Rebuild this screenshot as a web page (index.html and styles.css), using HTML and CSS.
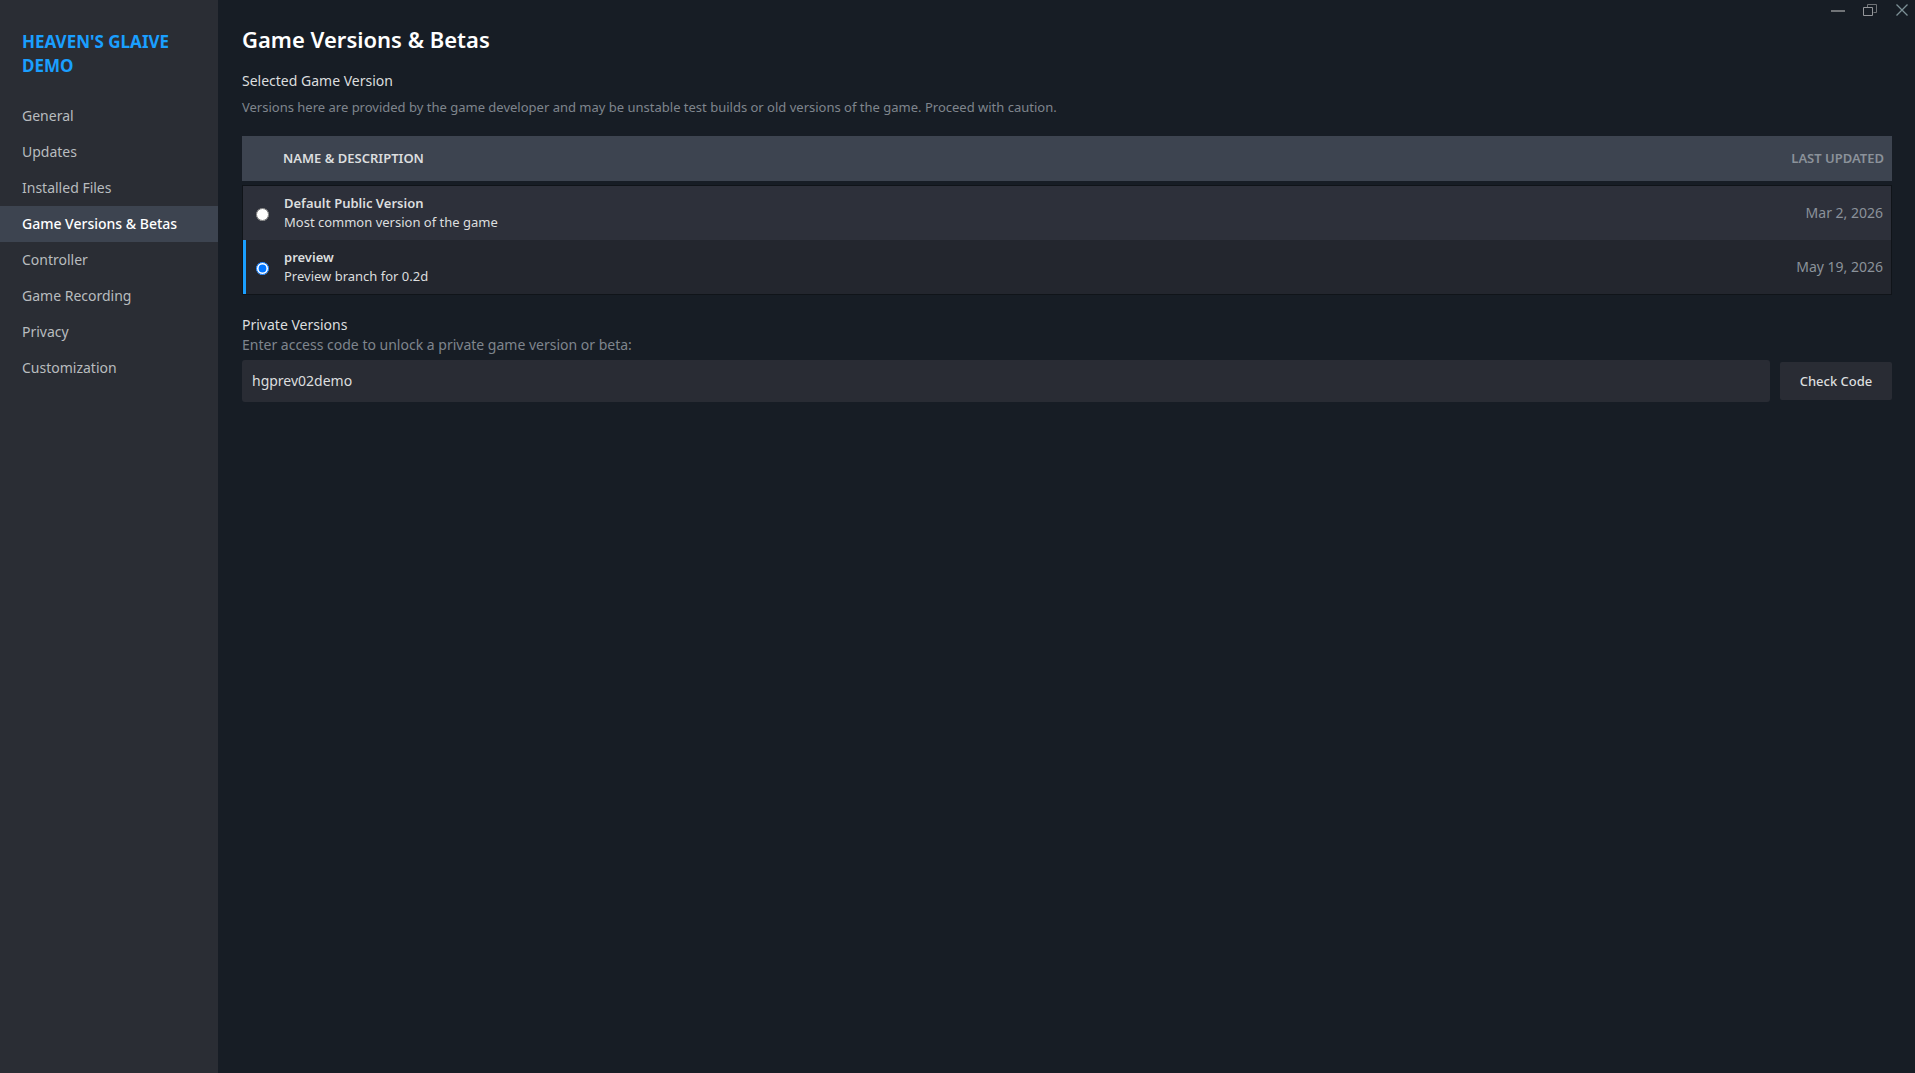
FILE: index.html
```html
<!DOCTYPE html>
<html lang="en">
<head>
<meta charset="utf-8">
<meta name="viewport" content="width=device-width, initial-scale=1">
<title>Heaven's Glaive Demo - Properties</title>
<link rel="stylesheet" href="styles.css">
</head>
<body>
<div class="app">
  <aside class="sidebar">
    <h1 class="game-title">HEAVEN'S GLAIVE DEMO</h1>
    <nav class="nav">
      <a class="nav-item" href="#general">General</a>
      <a class="nav-item" href="#updates">Updates</a>
      <a class="nav-item" href="#files">Installed Files</a>
      <a class="nav-item active" href="#betas" aria-current="page">Game Versions &amp; Betas</a>
      <a class="nav-item" href="#controller">Controller</a>
      <a class="nav-item" href="#recording">Game Recording</a>
      <a class="nav-item" href="#privacy">Privacy</a>
      <a class="nav-item" href="#customization">Customization</a>
    </nav>
  </aside>
  <div class="main">
    <div class="window-bar">
      <button class="window-button" type="button" aria-label="Minimize">
        <svg width="14" height="14" viewBox="0 0 14 14"><path d="M0 8H14" stroke="#707377" stroke-width="2"/></svg>
      </button>
      <button class="window-button" type="button" aria-label="Restore">
        <svg width="14" height="14" viewBox="0 0 14 14" fill="none"><path d="M4.5 4V1.5H13.5V9.5H10.5" stroke="#707377"/><path d="M.5 4.5H9.500V12.500H.5Z" stroke="#94969a"/></svg>
      </button>
      <button class="window-button" type="button" aria-label="Close">
        <svg width="14" height="14" viewBox="0 0 14 14"><path d="M1.5 1.5L12.5 12.5M12.5 1.5L1.5 12.5" stroke="#7c9096" stroke-width="1.3"/></svg>
      </button>
    </div>
    <main class="content">
      <h2 class="page-title">Game Versions &amp; Betas</h2>
      <h3 class="section-title">Selected Game Version</h3>
      <p class="note">Versions here are provided by the game developer and may be unstable test builds or old versions of the game. Proceed with caution.</p>
      <table class="versions">
        <thead class="versions-head">
          <tr class="versions-row">
            <td></td>
            <th scope="col">NAME &amp; DESCRIPTION</th>
            <th scope="col" class="updated">LAST UPDATED</th>
          </tr>
        </thead>
        <tbody class="versions-body">
          <tr class="versions-row">
            <td class="pick"><input class="radio" type="radio" name="version" id="v-public"></td>
            <td><label class="version" for="v-public"><strong>Default Public Version</strong><span>Most common version of the game</span></label></td>
            <td class="updated">Mar 2, 2026</td>
          </tr>
          <tr class="versions-row selected">
            <td class="pick"><input class="radio" type="radio" name="version" id="v-preview" checked></td>
            <td><label class="version" for="v-preview"><strong>preview</strong><span>Preview branch for 0.2d</span></label></td>
            <td class="updated">May 19, 2026</td>
          </tr>
        </tbody>
      </table>
      <h3 class="section-title private">Private Versions</h3>
      <form class="code-form">
        <label class="code-label" for="code">Enter access code to unlock a private game version or beta:</label>
        <div class="code-row">
          <input class="code-input" id="code" type="text" value="hgprev02demo" spellcheck="false">
          <button class="check-button" type="button">Check Code</button>
        </div>
      </form>
    </main>
  </div>
</div>
</body>
</html>
```
FILE: styles.css
```css
* {
  box-sizing: border-box;
}

body {
  margin: 0;
  background: #171d25;
  color: #dcdedf;
  font-family: "Noto Sans", sans-serif;
  font-size: 14px;
  line-height: 20px;
}

h1, h2, h3, p {
  margin: 0;
}

.app {
  display: flex;
  min-height: 100vh;
}

.sidebar {
  flex: 0 0 218px;
  padding-top: 30px;
  background: #2a2d34;
}

.game-title {
  padding: 0 22px;
  margin-bottom: 20px;
  color: #1a9fff;
  font-size: 17px;
  font-weight: 700;
  line-height: 24px;
}

.nav {
  display: flex;
  flex-direction: column;
}

.nav-item {
  padding: 8px 22px;
  color: #b8bcbf;
  text-decoration: none;
}

.nav-item.active {
  background: #3d4450;
  color: #fff;
  font-weight: 500;
}

.main {
  flex: 1;
  min-width: 0;
}

.window-bar {
  display: flex;
  justify-content: flex-end;
  gap: 6px;
  height: 20px;
}

.window-button {
  display: flex;
  align-items: center;
  justify-content: center;
  width: 26px;
  padding: 0;
  border: 0;
  background: none;
}

.content {
  padding: 3px 23px 24px 24px;
}

.page-title {
  margin-bottom: 16px;
  color: #fff;
  font-size: 22px;
  font-weight: 600;
  line-height: 32px;
}

.section-title {
  font-size: 14px;
  font-weight: 400;
}

.note {
  margin: 6px 0 19px;
  color: #7f858d;
  font-size: 13px;
}

.versions,
.versions-head,
.versions-body {
  display: block;
}

.versions {
  font-size: 13px;
}

.versions-row {
  display: grid;
  grid-template-columns: 32px 1fr auto;
  align-items: center;
  height: 54px;
  padding: 0 8px 0 9px;
  background: #2d303a;
}

.versions-row td,
.versions-row th {
  padding: 0;
  text-align: left;
}

.versions-head .versions-row {
  height: 45px;
  padding-bottom: 2px;
  background: #3d4450;
}

.versions-head th {
  font-weight: 600;
}

.versions-body {
  margin-top: 4px;
  border: 1px solid #101419;
}

.versions-row.selected {
  padding-left: 6px;
  border-left: 3px solid #1a9fff;
  background: #23262e;
}

.versions-row .updated {
  color: #8b929a;
  text-align: right;
}

.versions-body .updated {
  font-size: 14px;
}

.pick {
  display: flex;
}

.radio {
  width: 13px;
  height: 13px;
  margin: 2px 4px 0;
}

.version {
  display: flex;
  flex-direction: column;
  line-height: 19px;
}

.version strong {
  font-weight: 600;
}

.private {
  margin-top: 20px;
}

.code-label {
  display: block;
  margin-bottom: 5px;
  color: #7f858d;
}

.code-row {
  display: flex;
  align-items: center;
  gap: 10px;
}

.code-input {
  flex: 1;
  min-width: 0;
  height: 42px;
  padding: 0 10px 2px;
  border: 0;
  border-radius: 3px;
  background: #292c34;
  color: #dcdedf;
  font: inherit;
}

.check-button {
  flex: 0 0 112px;
  height: 38px;
  padding: 0;
  border: 0;
  border-radius: 2px;
  background: #292c34;
  color: #dcdedf;
  font-family: inherit;
  font-size: 13px;
  font-weight: 500;
}
```
